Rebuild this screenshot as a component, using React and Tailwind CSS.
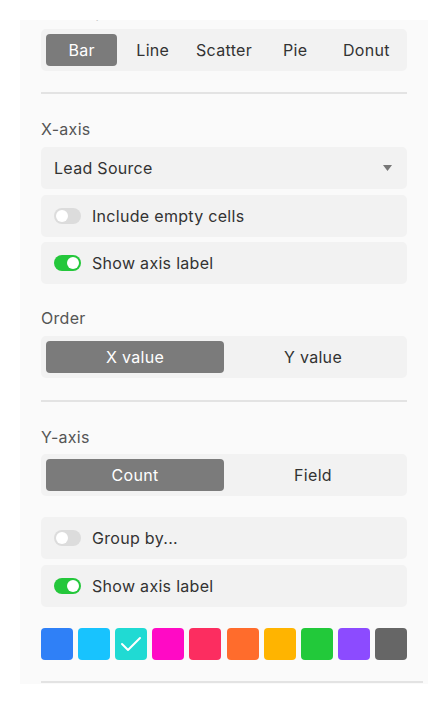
const SWATCHES = [
  '#2f80f7',
  '#18c3fe',
  '#20dad3',
  '#ff0ac5',
  '#fc2d60',
  '#ff6c2c',
  '#ffb400',
  '#22c93a',
  '#8c4bff',
  '#666666',
]

function Label({ children, className = '' }) {
  return <p className={`text-[16px] leading-[24px] text-[#555] ${className}`}>{children}</p>
}

function Segmented({ items, active }) {
  return (
    <div className="flex h-[42px] p-[5px] rounded-[5px] bg-[#f2f2f2]">
      {items.map(item => (
        <div
          key={item}
          className={`flex-1 flex items-center justify-center rounded-[4px] text-[16px] ${
            item === active ? 'bg-[#7b7b7b] text-white' : 'text-[#333]'
          }`}
        >
          {item}
        </div>
      ))}
    </div>
  )
}

function Toggle({ on }) {
  return (
    <div className={`relative w-[27px] h-[16px] rounded-full shrink-0 ${on ? 'bg-[#24c73b]' : 'bg-[#dcdcdc]'}`}>
      <div className={`absolute top-[2px] w-[12px] h-[12px] rounded-full bg-white ${on ? 'right-[2px]' : 'left-[2px]'}`} />
    </div>
  )
}

function ToggleRow({ on, children }) {
  return (
    <div className="flex items-center gap-[11px] h-[42px] px-[13px] rounded-[5px] bg-[#f2f2f2] text-[16px] text-[#333]">
      <Toggle on={on} />
      <span>{children}</span>
    </div>
  )
}

function Divider({ className = '' }) {
  return <div className={`h-[2px] bg-[#e3e3e3] ${className}`} />
}

export default function App() {
  return (
    <div className="min-h-[704px] bg-white pt-[20px] pl-[20px]" style={{ fontFamily: 'Inter, "Noto Sans", sans-serif' }}>
      <div className="w-[408px] h-[664px] bg-[#fafafa] overflow-hidden px-[21px] tracking-[0.3px]">
        {/* Chart type (scrolled, label clipped) */}
        <Label className="mt-[-21px] mb-[6px]">Chart type</Label>
        <Segmented items={['Bar', 'Line', 'Scatter', 'Pie', 'Donut']} active="Bar" />

        <Divider className="mt-[21px]" />

        {/* X-axis */}
        <Label className="mt-[23px] mb-[6px]">X-axis</Label>
        <div className="flex items-center justify-between h-[42px] pl-[13px] pr-[15px] rounded-[5px] bg-[#f2f2f2] text-[16px] text-[#333]">
          <span>Lead Source</span>
          <svg width="9" height="6" viewBox="0 0 9 6">
            <path d="M0 0 H9 L4.5 6 Z" fill="#777" />
          </svg>
        </div>
        <div className="mt-[6px] flex flex-col gap-[5px]">
          <ToggleRow on={false}>Include empty cells</ToggleRow>
          <ToggleRow on>Show axis label</ToggleRow>
        </div>

        {/* Order */}
        <Label className="mt-[22px] mb-[6px]">Order</Label>
        <Segmented items={['X value', 'Y value']} active="X value" />

        <Divider className="mt-[22px]" />

        {/* Y-axis */}
        <Label className="mt-[23px] mb-[5px]">Y-axis</Label>
        <Segmented items={['Count', 'Field']} active="Count" />

        <div className="mt-[21px] flex flex-col gap-[6px]">
          <ToggleRow on={false}>Group by...</ToggleRow>
          <ToggleRow on>Show axis label</ToggleRow>
        </div>

        {/* Colour swatches */}
        <div className="mt-[21px] flex justify-between">
          {SWATCHES.map((c, i) => (
            <div
              key={c}
              className="w-[32px] h-[32px] rounded-[4px] flex items-center justify-center"
              style={{ backgroundColor: c }}
            >
              {i === 2 && (
                <svg width="22" height="16" viewBox="0 0 22 16">
                  <path d="M2 8 L8 14 L20 2" fill="none" stroke="white" strokeWidth="2" strokeLinecap="round" strokeLinejoin="round" />
                </svg>
              )}
            </div>
          ))}
        </div>

        <Divider className="mt-[21px] w-[382px]" />
      </div>
    </div>
  )
}
